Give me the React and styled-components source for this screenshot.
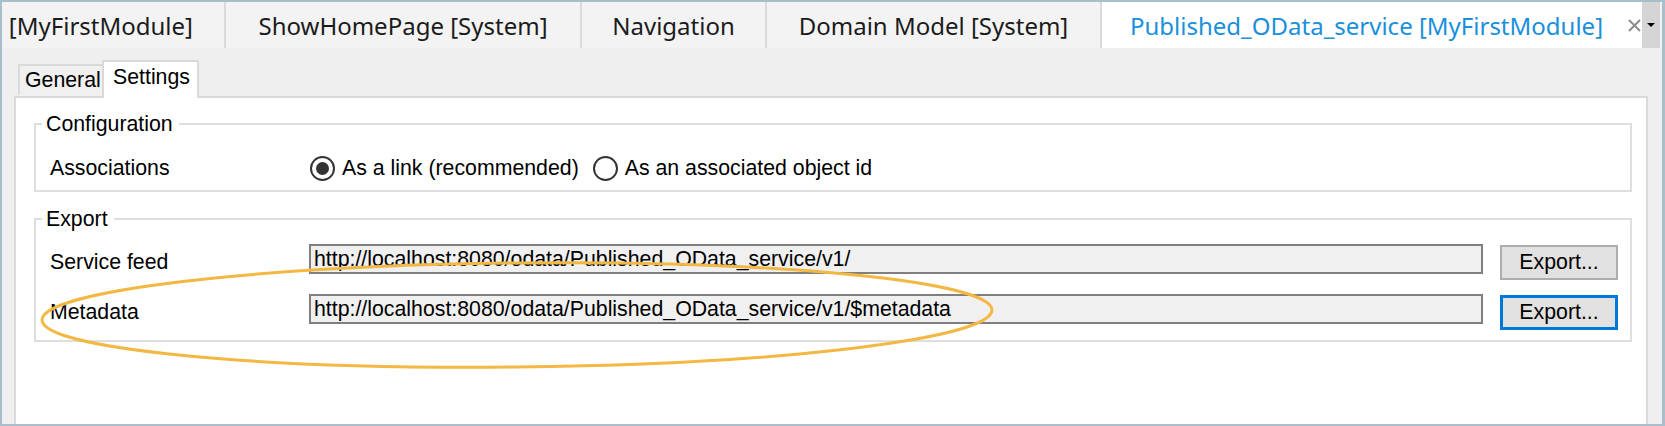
import styled, { createGlobalStyle } from "styled-components";

const GlobalStyle = createGlobalStyle`
  html, body {
    margin: 0;
    padding: 0;
    background: #fff;
  }
  body {
    width: 1665px;
    height: 426px;
    overflow: hidden;
  }
  * {
    box-sizing: border-box;
  }
`;

const docTabs = [
  { label: "[MyFirstModule]", width: 224, clipped: true },
  { label: "ShowHomePage [System]", width: 356 },
  { label: "Navigation", width: 185 },
  { label: "Domain Model [System]", width: 335 },
];

function App() {
  return (
    <>
      <GlobalStyle />
      <Frame>
        <TabBar>
          {docTabs.map((t) => (
            <DocTab key={t.label} $w={t.width} $clipped={t.clipped}>
              {t.label}
            </DocTab>
          ))}
          <ActiveTab>
            <span>Published_OData_service [MyFirstModule]</span>
            <svg width="13" height="13" viewBox="0 0 13 13">
              <path d="M1 1 L12 12 M12 1 L1 12" stroke="#8c8c8c" strokeWidth="2" />
            </svg>
          </ActiveTab>
          <Dropdown>
            <Caret />
          </Dropdown>
        </TabBar>

        <Body>
          <PageTabs>
            <PageTab>General</PageTab>
            <PageTab $selected>Settings</PageTab>
          </PageTabs>

          <Panel>
            <GroupBox $pad="16px 12px 6px 6px">
              <Caption>Configuration</Caption>
              <ConfigRow>
                <Label>Associations</Label>
                <RadioGroup>
                  <RadioOption>
                    <RadioCircle $checked />
                    As a link (recommended)
                  </RadioOption>
                  <RadioOption>
                    <RadioCircle />
                    As an associated object id
                  </RadioOption>
                </RadioGroup>
              </ConfigRow>
            </GroupBox>

            <GroupBox $pad="13px 12px 10px 6px">
              <Caption>Export</Caption>
              <ExportRows>
                <ExportRow>
                  <Label>Service feed</Label>
                  <UrlField>http://localhost:8080/odata/Published_OData_service/v1/</UrlField>
                  <Button>Export...</Button>
                </ExportRow>
                <ExportRow>
                  <Label>Metadata</Label>
                  <UrlField>http://localhost:8080/odata/Published_OData_service/v1/$metadata</UrlField>
                  <Button $focused>Export...</Button>
                </ExportRow>
              </ExportRows>
            </GroupBox>
          </Panel>
        </Body>

        {/* hand-drawn highlight over the metadata row */}
        <Highlight width="1665" height="426" viewBox="0 0 1665 426">
          <ellipse
            cx="517"
            cy="315"
            rx="475"
            ry="52"
            fill="none"
            stroke="#f3b843"
            strokeWidth="3"
            transform="rotate(-0.6 517 315)"
          />
        </Highlight>
      </Frame>
    </>
  );
}

export default App;

const Frame = styled.div`
  position: relative;
  width: 1665px;
  height: 426px;
  border-style: solid;
  border-color: #a9bdca;
  border-width: 2px 3px 2px 2px;
  display: flex;
  flex-direction: column;
  overflow: hidden;
  background: #efefef;
`;

const TabBar = styled.div`
  flex: none;
  height: 46px;
  display: flex;
  background: #f3f3f3;
  font-family: "Noto Sans", "Open Sans", sans-serif;
  font-size: 24px;
  color: #1b1b1b;
`;

const DocTab = styled.div`
  flex: none;
  width: ${(p) => p.$w}px;
  display: flex;
  align-items: center;
  justify-content: ${(p) => (p.$clipped ? "flex-end" : "center")};
  padding-right: ${(p) => (p.$clipped ? "31px" : "0")};
  border-right: 2px solid #dadada;
  white-space: nowrap;
  overflow: hidden;
`;

const ActiveTab = styled.div`
  flex: none;
  width: 540px;
  display: flex;
  align-items: center;
  justify-content: space-between;
  padding: 0 1px 0 28px;
  background: #fff;
  color: #1a8fdb;
  white-space: nowrap;
`;

const Dropdown = styled.div`
  flex: none;
  width: 18px;
  display: flex;
  align-items: center;
  justify-content: center;
  background: #d5d5d5;
`;

const Caret = styled.span`
  width: 0;
  height: 0;
  border-left: 4px solid transparent;
  border-right: 4px solid transparent;
  border-top: 4px solid #000;
`;

const Body = styled.div`
  flex: 1;
  display: flex;
  flex-direction: column;
  padding: 0 14px 0 12px;
  background: #efefef;
  font-family: "Liberation Sans", Arial, sans-serif;
  font-size: 21.3px;
  color: #000;
`;

const PageTabs = styled.div`
  flex: none;
  height: 50px;
  margin-bottom: -2px;
  padding-left: 4px;
  display: flex;
  align-items: flex-end;
  position: relative;
  z-index: 1;
`;

const PageTab = styled.div`
  display: flex;
  align-items: center;
  border: 2px solid #dadada;
  border-bottom: ${(p) => (p.$selected ? "none" : "2px solid transparent")};
  background: ${(p) => (p.$selected ? "#fff" : "#f0f0f0")};
  height: ${(p) => (p.$selected ? "38px" : "32px")};
  width: ${(p) => (p.$selected ? "97px" : "86px")};
  margin-left: ${(p) => (p.$selected ? "-2px" : "0")};
  margin-bottom: ${(p) => (p.$selected ? "0" : "2px")};
  padding: ${(p) => (p.$selected ? "0 0 6px 9px" : "0 0 0 5px")};
  position: relative;
  z-index: ${(p) => (p.$selected ? 2 : 1)};
`;

const Panel = styled.div`
  flex: 1;
  background: #fff;
  border: 2px solid #dadada;
  border-bottom: none;
  padding: 14px 14px 0 18px;
  display: flex;
  flex-direction: column;
  gap: 15px;
`;

const GroupBox = styled.fieldset`
  margin: 0;
  min-inline-size: 0;
  border: 2px solid #dedede;
  padding: ${(p) => p.$pad};
`;

const Caption = styled.legend`
  padding: 0 6px 0 4px;
  line-height: 24px;
`;

const Label = styled.div`
  white-space: nowrap;
  align-self: center;
`;

const ConfigRow = styled.div`
  height: 32px;
  padding-left: 8px;
  display: grid;
  grid-template-columns: 259px 1fr;
  align-items: center;
`;

const RadioGroup = styled.div`
  display: flex;
  align-items: center;
  gap: 14px;
  padding-left: 1px;
`;

const RadioOption = styled.label`
  display: flex;
  align-items: center;
  gap: 7px;
  white-space: nowrap;
`;

const RadioCircle = styled.span`
  flex: none;
  width: 25px;
  height: 25px;
  border-radius: 50%;
  border: 2px solid #333;
  display: flex;
  align-items: center;
  justify-content: center;

  &::after {
    content: "";
    display: ${(p) => (p.$checked ? "block" : "none")};
    width: 13px;
    height: 13px;
    border-radius: 50%;
    background: #333;
  }
`;

const ExportRows = styled.div`
  display: flex;
  flex-direction: column;
  gap: 14px;
  padding-left: 8px;
`;

const ExportRow = styled.div`
  height: 36px;
  display: grid;
  grid-template-columns: 242px 1fr 118px;
  column-gap: 17px;
  align-items: start;
`;

const UrlField = styled.div`
  height: 30px;
  line-height: 26px;
  padding-left: 3px;
  border: 2px solid #7f7f7f;
  background: #f0f0f0;
  white-space: nowrap;
  overflow: hidden;
`;

const Button = styled.div`
  height: 35px;
  margin-top: 1px;
  display: flex;
  align-items: center;
  justify-content: center;
  background: #e1e1e1;
  border: ${(p) => (p.$focused ? "3px solid #0078d7" : "2px solid #adadad")};
`;

const Highlight = styled.svg`
  position: absolute;
  top: -2px;
  left: -2px;
  pointer-events: none;
  z-index: 5;
`;
